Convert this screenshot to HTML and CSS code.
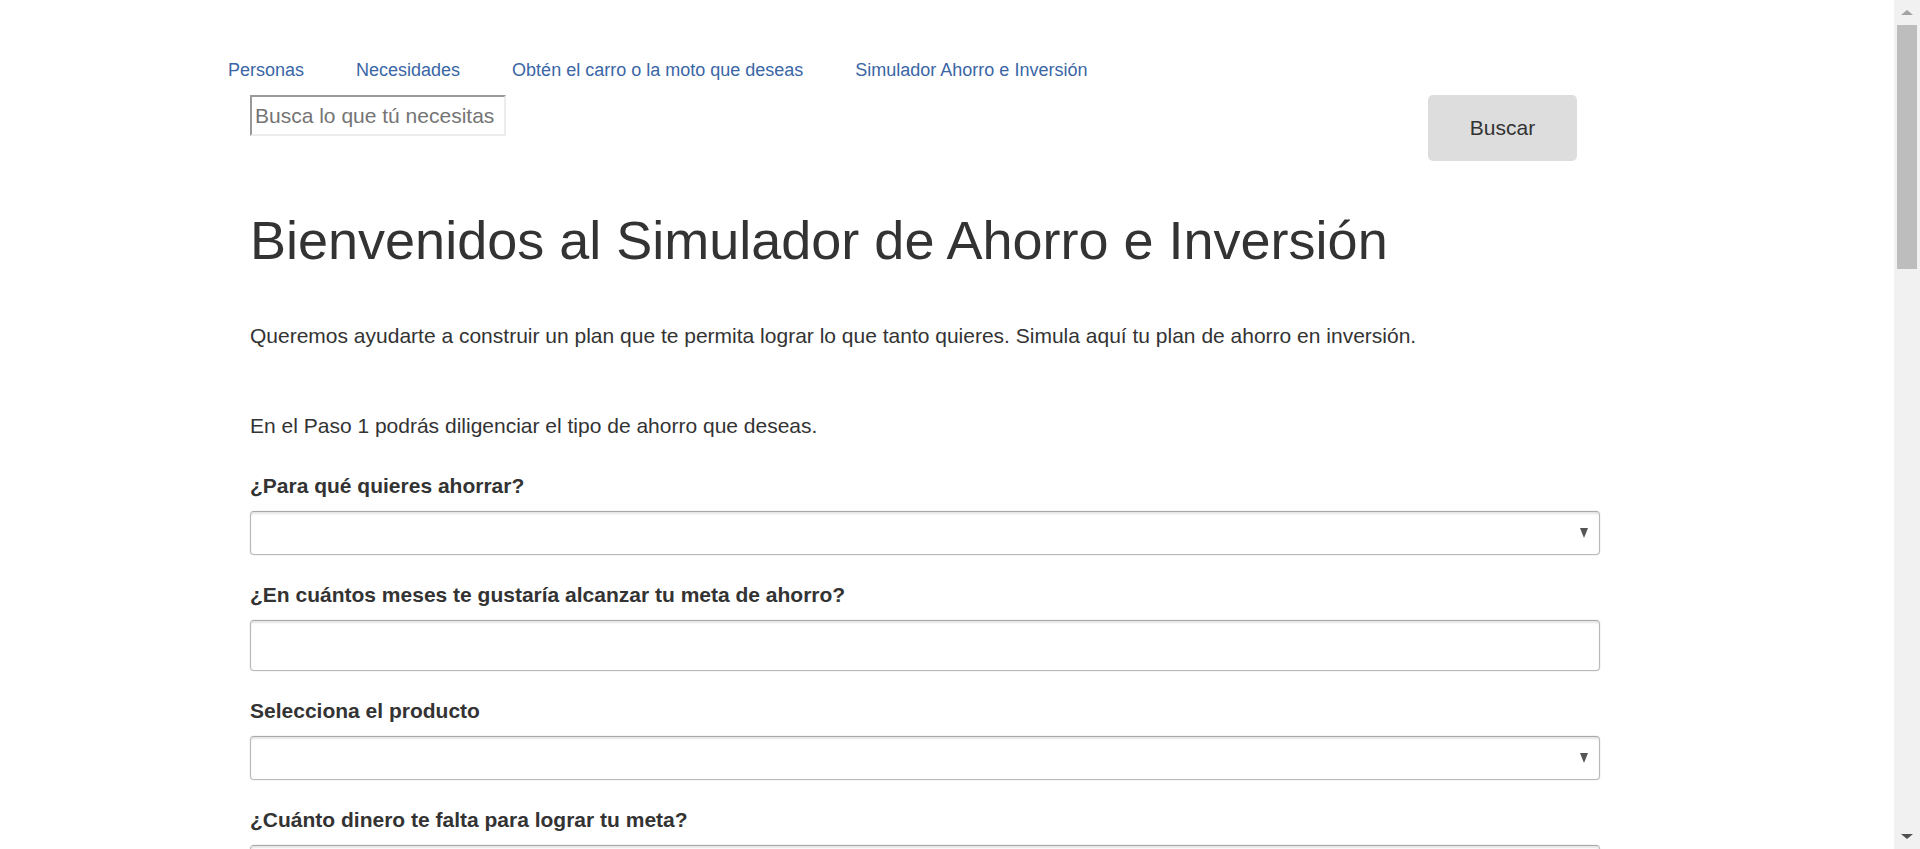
FILE: index.html
```html
<!DOCTYPE html>
<html lang="es">
<head>
<meta charset="utf-8">
<title>Simulador Ahorro e Inversión</title>
<link rel="stylesheet" href="styles.css">
</head>
<body>
<nav class="topnav">
  <a class="topnav-link" href="#">Personas</a>
  <a class="topnav-link" href="#">Necesidades</a>
  <a class="topnav-link" href="#">Obtén el carro o la moto que deseas</a>
  <a class="topnav-link" href="#">Simulador Ahorro e Inversión</a>
</nav>
<div class="search-row">
  <input class="search-input" type="text" placeholder="Busca lo que tú necesitas">
  <button class="search-btn" type="button">Buscar</button>
</div>
<main class="content">
  <h1 class="title">Bienvenidos al Simulador de Ahorro e Inversión</h1>
  <p class="intro">Queremos ayudarte a construir un plan que te permita lograr lo que tanto quieres. Simula aquí tu plan de ahorro en inversión.</p>
  <p class="step">En el Paso 1 podrás diligenciar el tipo de ahorro que deseas.</p>
  <form class="sim-form">
    <div class="field">
      <label class="field-label">¿Para qué quieres ahorrar?</label>
      <div class="select-wrap"><select class="control control-select"><option></option></select></div>
    </div>
    <div class="field">
      <label class="field-label">¿En cuántos meses te gustaría alcanzar tu meta de ahorro?</label>
      <input class="control control-input" type="text">
    </div>
    <div class="field">
      <label class="field-label">Selecciona el producto</label>
      <div class="select-wrap"><select class="control control-select"><option></option></select></div>
    </div>
    <div class="field">
      <label class="field-label">¿Cuánto dinero te falta para lograr tu meta?</label>
      <input class="control control-input" type="text">
    </div>
    <div class="field">
      <label class="field-label">¿Con cuánto dinero cuentas hoy?</label>
      <input class="control control-input" type="text">
    </div>
    <div class="field">
      <label class="field-label">¿Cuánto puedes ahorrar cada mes?</label>
      <input class="control control-input" type="text">
    </div>
    <button class="search-btn sim-btn" type="button">Simular</button>
  </form>
</main>
<footer class="footer">
  <p class="footer-text">Simulador de Ahorro e Inversión</p>
</footer>
<div class="fake-scrollbar" aria-hidden="true">
  <div class="sb-btn sb-up"><span class="sb-arrow-up"></span></div>
  <div class="sb-track"><div class="sb-thumb"></div></div>
  <div class="sb-btn sb-down"><span class="sb-arrow-down"></span></div>
</div>
</body>
</html>
```

FILE: styles.css
```css
html, body {
  margin: 0;
  padding: 0;
  background: #ffffff;
}

body {
  font-family: "Liberation Sans", Arial, sans-serif;
  color: #333333;
}

.topnav {
  display: flex;
  padding: 58px 0 0 228px;
  line-height: 24px;
  font-size: 18px;
}

.topnav-link {
  color: #3a66a6;
  text-decoration: none;
  margin-right: 52px;
}

.search-row {
  display: flex;
  justify-content: space-between;
  align-items: flex-start;
  margin: 13px 0 0 250px;
  width: 1327px;
}

.search-input {
  box-sizing: border-box;
  width: 256px;
  height: 41px;
  margin: 0;
  padding: 0 3px;
  font-family: "Liberation Sans", Arial, sans-serif;
  font-size: 21px;
  color: #333;
  border-style: solid;
  border-width: 2px;
  border-color: #999999 #ececec #ececec #999999;
  background: #fff;
  outline: none;
}

.search-input::placeholder {
  color: #757575;
}

.search-btn {
  box-sizing: border-box;
  width: 149px;
  height: 66px;
  border: none;
  border-radius: 5px;
  background: #dddddd;
  color: #333333;
  font-family: "Liberation Sans", Arial, sans-serif;
  font-size: 21px;
  padding: 0;
  cursor: pointer;
}

.content {
  margin-left: 250px;
  width: 1350px;
}

.title {
  margin: 49px 0 0;
  font-size: 54px;
  font-weight: normal;
  line-height: 60px;
  color: #333333;
}

.intro {
  margin: 51px 0 0;
  font-size: 21px;
  line-height: 30px;
}

.step {
  margin: 60px 0 0;
  font-size: 21px;
  line-height: 30px;
}

.sim-form {
  margin-top: 30px;
}

.field {
  margin-bottom: 25px;
}

.field-label {
  display: block;
  font-size: 21px;
  font-weight: bold;
  line-height: 30px;
  margin-bottom: 10px;
}

.control {
  display: block;
  box-sizing: border-box;
  width: 100%;
  margin: 0;
  padding: 6px 12px;
  font-family: "Liberation Sans", Arial, sans-serif;
  font-size: 21px;
  color: #555;
  background: #fff;
  border: 1px solid #b9b9b9;
  border-top-color: #a9a9a9;
  border-radius: 4px;
  box-shadow: inset 0 2px 2px rgba(0, 0, 0, 0.1), 0 0 0 1px rgba(0, 0, 0, 0.04);
  outline: none;
}

.control-select {
  height: 44px;
  -webkit-appearance: none;
  appearance: none;
}

.control-input {
  height: 51px;
}

.select-wrap {
  position: relative;
}

.select-wrap::after {
  content: "";
  position: absolute;
  right: 12px;
  top: 17px;
  width: 0;
  height: 0;
  border-left: 4px solid transparent;
  border-right: 4px solid transparent;
  border-top: 10px solid #555555;
  pointer-events: none;
}

.sim-btn {
  margin-top: 20px;
}

.footer {
  margin-top: 2900px;
  padding: 40px 250px;
  background: #ffffff;
}

.footer-text {
  margin: 0;
  font-size: 16px;
  color: #777;
}

/* scrollbar drawn over the page edge, as captured in the reference */
.fake-scrollbar {
  position: fixed;
  top: 0;
  right: 0;
  width: 26px;
  height: 100vh;
  display: flex;
  flex-direction: column;
  background: #f1f1f1;
}

.sb-btn {
  height: 25px;
  flex: none;
  display: flex;
  align-items: center;
  justify-content: center;
}

.sb-arrow-up {
  width: 0;
  height: 0;
  border-left: 6px solid transparent;
  border-right: 6px solid transparent;
  border-bottom: 5px solid #a3a3a3;
}

.sb-arrow-down {
  width: 0;
  height: 0;
  border-left: 6px solid transparent;
  border-right: 6px solid transparent;
  border-top: 5px solid #505050;
}

.sb-track {
  flex: 1;
  padding: 0 3px;
}

.sb-thumb {
  height: 244px;
  background: #bdbdbd;
}
```
